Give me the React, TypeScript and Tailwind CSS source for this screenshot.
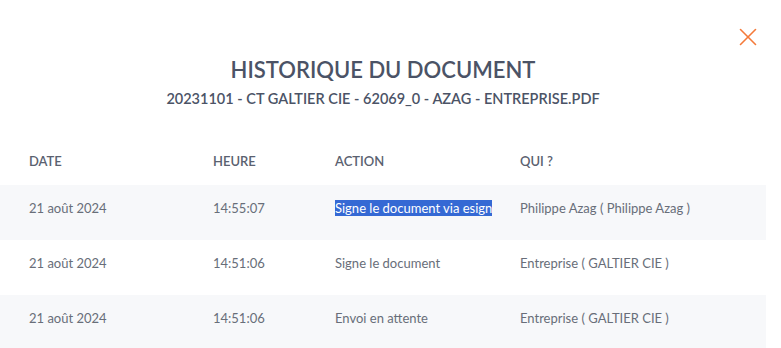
import { X } from 'lucide-react'

const rows = [
  { date: '21 août 2024', time: '14:55:07', action: 'Signe le document via esign', who: 'Philippe Azag ( Philippe Azag )', selected: true },
  { date: '21 août 2024', time: '14:51:06', action: 'Signe le document', who: 'Entreprise ( GALTIER CIE )' },
  { date: '21 août 2024', time: '14:51:06', action: 'Envoi en attente', who: 'Entreprise ( GALTIER CIE )' },
]

const App = () => {
  return (
    <div className="h-[348px] w-[781px] overflow-hidden bg-white font-['Lato',sans-serif]">
      <div className="relative w-[766px]">
        <button className="absolute right-[3px] top-[22px] text-[#f47a3a]">
          <X size={30} strokeWidth={1.3} />
        </button>

        <div className="flex flex-col items-center pt-[56px]">
          <h1 className="text-[22px] font-semibold leading-7 text-[#4b5366]">HISTORIQUE DU DOCUMENT</h1>
          <p className="mt-[5px] text-[14.5px] font-semibold leading-5 text-[#4b5366]">
            20231101 - CT GALTIER CIE - 62069_0 - AZAG - ENTREPRISE.PDF
          </p>
        </div>

        <div className="mt-[42px]">
          <div className="grid grid-cols-[184px_122px_185px_1fr] pl-[29px] pb-[14px] text-[13px] font-semibold leading-5 text-[#5a6170]">
            <span>DATE</span>
            <span>HEURE</span>
            <span>ACTION</span>
            <span>QUI ?</span>
          </div>

          {rows.map((r, i) => (
            <div
              key={i}
              className={`grid h-[55px] grid-cols-[184px_122px_185px_1fr] pl-[29px] pt-[13px] text-[13px] leading-5 text-[#686e79] ${i % 2 === 0 ? 'bg-[#f7f8fa]' : 'bg-white'}`}
            >
              <span>{r.date}</span>
              <span>{r.time}</span>
              <span>
                {r.selected ? <span className="bg-[#3569d4] text-white">{r.action}</span> : r.action}
              </span>
              <span>{r.who}</span>
            </div>
          ))}
        </div>
      </div>
    </div>
  )
}

export default App
